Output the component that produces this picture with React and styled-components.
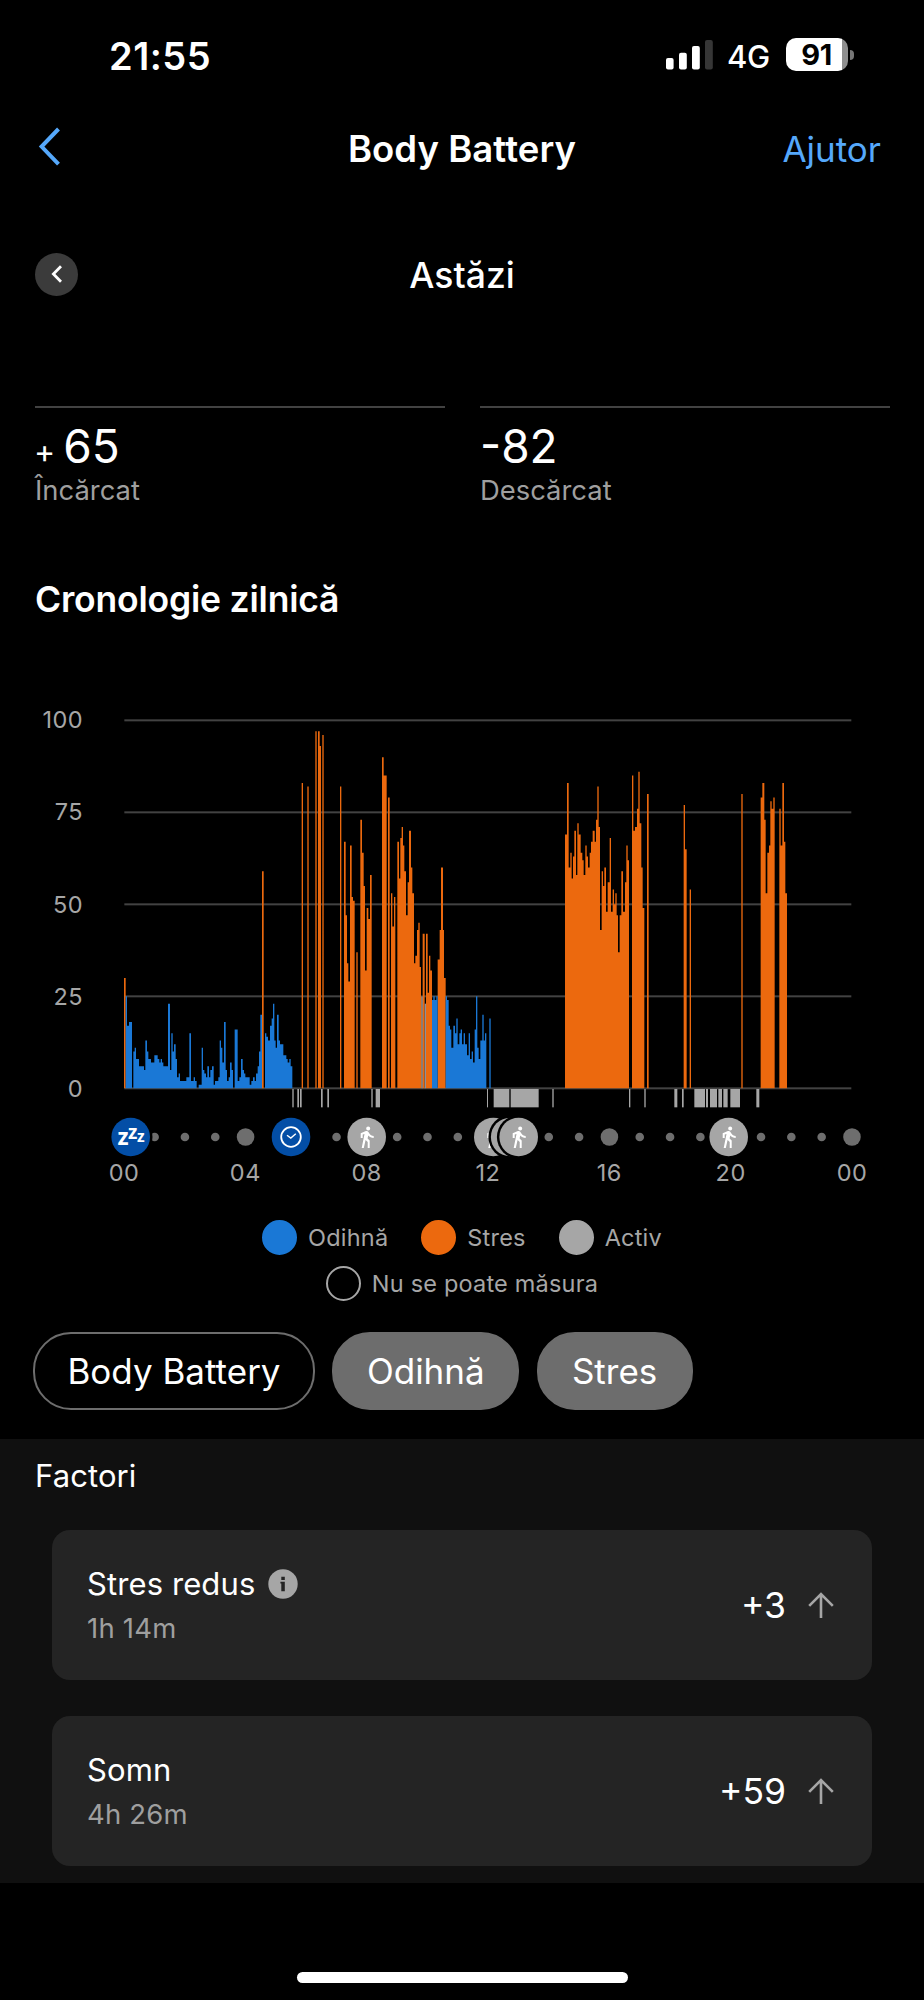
import React from "react";
import styled, { createGlobalStyle } from "styled-components";
import { MdDirectionsWalk } from "react-icons/md";

const BLUE = "#1a78d6";
const ORANGE = "#ec690e";
const GRAY = "#a6a6a6";

// the plot is 2184 x 1104 units, 3 units for each pixel
// steps: x, value, x, value ... the last x closes the run
const runs = [
  { color: ORANGE, at: 0, steps: [0, 30, 5] },
  {
    color: BLUE,
    at: -42,
    steps: [
      47, 25, 51, 17, 57, 18, 66, 0, 70, 10, 74, 11, 78, 8, 87, 6, 102, 5, 106,
      13, 111, 10, 115, 8, 123, 7, 133, 9, 143, 8, 148, 7, 152, 8, 156, 7, 160,
      6, 174, 23, 180, 5, 184, 15, 188, 10, 192, 12, 197, 8, 201, 3, 206, 4,
      210, 2, 229, 3, 238, 15, 243, 2, 251, 3, 255, 2, 260, 0, 266, 1, 275, 11,
      279, 5, 283, 4, 288, 3, 292, 6, 297, 3, 301, 5, 306, 6, 311, 1, 315, 2,
      325, 3, 329, 13, 333, 11, 337, 7, 342, 18, 347, 5, 351, 2, 356, 3, 360, 7,
      365, 5, 369, 0, 374, 16, 383, 2, 388, 3, 393, 8, 398, 5, 402, 4, 406, 3,
      419, 1, 424, 2, 429, 3, 434, 2, 438, 4, 443, 6, 447, 10, 451, 20, 456, 0,
      465, 15, 469, 14, 474, 13, 480, 17, 485, 19, 489, 23, 493, 13, 497, 11,
      501, 20, 506, 13, 510, 12, 520, 9, 529, 8, 533, 7, 538, 8, 542, 6, 547,
    ],
  },
  { color: ORANGE, at: -42, steps: [456, 59, 461] },
  {
    color: ORANGE,
    at: 498,
    steps: [
      35, 83, 39, 0, 52, 82, 56, 0, 76, 97, 80, 0, 84, 97, 89, 93, 93, 0, 97,
      96, 101, 0, 150, 82, 154, 0, 162, 67, 167, 47, 171, 34, 175, 29, 180, 66,
      185, 52, 189, 51, 194, 0, 199, 37, 203, 0, 211, 73, 216, 64, 221, 55, 225,
      32, 230, 49, 235, 46, 240, 58, 245, 0, 276, 90, 281, 85, 290, 0, 294, 79,
      299, 0, 303, 53, 307, 44, 312, 52, 316, 0, 322, 67, 327, 57, 331, 68, 335,
      71, 339, 66, 343, 59, 348, 47, 353, 56, 357, 70, 363, 60, 367, 53, 372,
      34, 376, 36, 381, 43, 385, 45, 389, 33, 393, 0, 398, 42, 404, 0, 408, 42,
      413, 26, 417, 36, 421, 32, 426, 0, 443, 35, 449, 43, 453, 60, 459, 43,
      462, 30, 467,
    ],
  },
  { color: "#8f7c71", at: 498, steps: [393, 25, 399] },
  { color: "#8f9099", at: 498, steps: [404, 23, 408] },
  {
    color: BLUE,
    at: 498,
    steps: [
      426, 24, 430, 25, 434, 24, 439, 25, 443, 0, 467, 25, 471, 24, 476, 17,
      480, 16, 484, 11, 490, 17, 495, 15, 499, 19, 503, 12, 508, 15, 512, 16,
      516, 12, 521, 15, 525, 12, 531, 9, 536, 15, 540, 8, 545, 10, 549, 7, 554,
      16, 558, 25, 562, 11, 566, 8, 571, 13, 577, 20, 581, 13, 585, 15, 589, 0,
      598, 19, 602,
    ],
  },
  {
    color: ORANGE,
    at: 1038,
    steps: [
      285, 69, 291, 83, 296, 60, 301, 64, 305, 57, 309, 63, 313, 70, 318, 58,
      322, 72, 326, 69, 332, 64, 337, 62, 341, 58, 346, 66, 350, 63, 354, 60,
      359, 64, 363, 67, 368, 70, 374, 67, 378, 73, 382, 82, 386, 71, 390, 43,
      395, 59, 399, 55, 403, 60, 408, 48, 413, 56, 419, 68, 423, 48, 428, 54,
      432, 50, 436, 53, 440, 47, 444, 37, 449, 47, 454, 59, 459, 48, 465, 56,
      469, 66, 473, 62, 477, 0, 486, 85, 490, 70, 495, 71, 501, 76, 505, 86,
      509, 72, 514, 60, 518, 49, 523, 0, 531, 80, 536,
    ],
  },
  {
    color: ORANGE,
    at: 1578,
    steps: [
      101, 77, 105, 65, 110, 0, 119, 54, 123, 0, 274, 80, 278, 0, 332, 79, 337,
      83, 343, 73, 347, 53, 352, 64, 357, 66, 361, 78, 365, 76, 370, 79, 374, 0,
      388, 76, 392, 66, 397, 83, 402, 67, 406, 53, 411,
    ],
  },
];

// [x, width] of each active period under the zero line
const activity = [
  [505, 4], [520, 5], [528, 5], [591, 5], [610, 5], [742, 4], [755, 13],
  [1089, 3], [1109, 47], [1160, 84], [1285, 4], [1515, 4], [1561, 4],
  [1651, 9], [1674, 5], [1711, 32], [1746, 6], [1758, 21], [1783, 11],
  [1798, 13], [1819, 29], [1897, 9],
];

const scale = [100, 75, 50, 25, 0];
const hours = ["00", "04", "08", "12", "16", "20", "00"];

const events = [
  { x: 130.7, type: "sleep" },
  { x: 291, type: "wake" },
  { x: 366.7, type: "walk" },
  { x: 493.3, type: "walk" },
  { x: 510.2, type: "walk" },
  { x: 518.7, type: "walk" },
  { x: 728.7, type: "walk" },
];

const factors = [
  { name: "Stres redus", time: "1h 14m", value: "+3", info: true },
  { name: "Somn", time: "4h 26m", value: "+59", info: false },
];

const toPath = ({ at, steps }) => {
  let d = `M${at + steps[0]} 1104`;
  for (let i = 0; i < steps.length - 1; i += 2) {
    d += `V${1104 - steps[i + 1] * 11.04}H${at + steps[i + 2]}`;
  }
  return d + "V1104Z";
};

function Plot() {
  return (
    <PlotSvg viewBox="0 -1 2184 1168">
      {scale.map((value) => (
        <rect
          key={value}
          x="1"
          y={1101 - value * 11.04}
          width="2181"
          height="6"
          fill="#424242"
        />
      ))}
      {runs.map((run, idx) => (
        <path key={idx} d={toPath(run)} fill={run.color} />
      ))}
      {activity.map(([x, width]) => (
        <rect key={x} x={x} y="1106" width={width} height="55" fill={GRAY} />
      ))}
    </PlotSvg>
  );
}

function EventIcon({ x, type }) {
  return (
    <g transform={`translate(${x} 22)`}>
      <circle r="21.8" fill="#000" />
      <circle r="19.3" fill={type === "walk" ? GRAY : "#034ea6"} />
      {type === "walk" && (
        <MdDirectionsWalk x="-12" y="-12" size={24} color="#fff" />
      )}
      {type === "wake" && (
        <g fill="none" stroke="#fff" strokeWidth="1.8">
          <circle r="9.8" />
          <path d="M-4 -1.8L-0.2 1L4.8 -3.2" strokeWidth="1.4" />
        </g>
      )}
      {type === "sleep" && (
        <g fill="#fff" fontFamily="Noto Sans" fontWeight="700">
          <text x="-13.3" y="7.6" fontSize="22.5">z</text>
          <text x="-2.7" y="2.4" fontSize="19">z</text>
          <text x="6.2" y="5" fontSize="15.5">z</text>
        </g>
      )}
    </g>
  );
}

function Timeline() {
  return (
    <TimelineSvg viewBox="0 0 924 44">
      {Array.from({ length: 25 }, (_, hour) => (
        <circle
          key={hour}
          cx={124.3 + hour * 30.32}
          cy="22"
          r={hour % 4 === 0 ? 8.8 : 4.3}
          fill="#6e6e6e"
        />
      ))}
      {events.map((event) => (
        <EventIcon key={event.x} {...event} />
      ))}
    </TimelineSvg>
  );
}

function FactorCard({ name, time, value, info }) {
  return (
    <Card>
      <div>
        <FactorName>
          {name}
          {info && (
            <svg width="30" height="30" viewBox="0 0 30 30">
              <circle cx="15" cy="15" r="14.7" fill={GRAY} />
              <path
                d="M13.3 7.8h3.5v3.3h-3.5zM12.4 12.8h4.4v9.4h-3.5v-7.8h-0.9z"
                fill="#242424"
              />
            </svg>
          )}
        </FactorName>
        <FactorTime>{time}</FactorTime>
      </div>
      <FactorValue>
        {value}
        <svg width="26" height="27" viewBox="0 0 26 27">
          <path
            d="M13 26V1.8M1.2 13.8L13 2L24.8 13.8"
            fill="none"
            stroke={GRAY}
            strokeWidth="2.6"
          />
        </svg>
      </FactorValue>
    </Card>
  );
}

function App() {
  return (
    <Screen>
      <GlobalStyle />
      <StatusBar>
        <Time>21:55</Time>
        <StatusIcons>
          <svg width="47" height="30" viewBox="0 0 47 30">
            <rect x="0" y="18" width="7.6" height="11.4" rx="2" fill="#fff" />
            <rect x="13" y="12.8" width="7.8" height="16.6" rx="2" fill="#fff" />
            <rect x="26" y="6" width="7.8" height="23.4" rx="2" fill="#fff" />
            <rect x="39" y="0" width="7.8" height="29.4" rx="2" fill="#363636" />
          </svg>
          <Network>4G</Network>
          <Battery>
            <Level>91</Level>
          </Battery>
          <BatteryTip />
        </StatusIcons>
      </StatusBar>

      <NavBar>
        <svg width="24" height="40" viewBox="0 0 24 40">
          <path
            d="M20.5 2L3.6 19.6L20.5 37.2"
            fill="none"
            stroke="#55a8fb"
            strokeWidth="4"
          />
        </svg>
        <Title>Body Battery</Title>
        <Help>Ajutor</Help>
      </NavBar>

      <DateNav>
        <RoundButton>
          <svg width="12" height="18" viewBox="0 0 12 18">
            <path
              d="M10 1.3L2.4 9L10 16.7"
              fill="none"
              stroke="#fff"
              strokeWidth="2.8"
            />
          </svg>
        </RoundButton>
        <Day>Astăzi</Day>
      </DateNav>

      <Stats>
        <Stat>
          <StatValue>
            <Plus>+</Plus>65
          </StatValue>
          <StatLabel>Încărcat</StatLabel>
        </Stat>
        <Stat>
          <StatValue>-82</StatValue>
          <StatLabel>Descărcat</StatLabel>
        </Stat>
      </Stats>

      <Heading>Cronologie zilnică</Heading>

      <Chart>
        <Scale>
          {scale.map((value) => (
            <span key={value}>{value}</span>
          ))}
        </Scale>
        <Plot />
      </Chart>
      <Timeline />
      <Hours>
        {hours.map((hour, idx) => (
          <span key={idx}>{hour}</span>
        ))}
      </Hours>

      <Legend>
        <LegendRow>
          <LegendItem>
            <Swatch color={BLUE} />
            Odihnă
          </LegendItem>
          <LegendItem>
            <Swatch color={ORANGE} />
            Stres
          </LegendItem>
          <LegendItem>
            <Swatch color={GRAY} />
            Activ
          </LegendItem>
        </LegendRow>
        <LegendRow>
          <LegendItem>
            <Swatch />
            Nu se poate măsura
          </LegendItem>
        </LegendRow>
      </Legend>

      <Filters>
        <Pill $width={282}>Body Battery</Pill>
        <Pill $width={187} $filled>
          Odihnă
        </Pill>
        <Pill $width={156} $filled>
          Stres
        </Pill>
      </Filters>

      <Factors>
        <FactorsTitle>Factori</FactorsTitle>
        {factors.map((factor) => (
          <FactorCard key={factor.name} {...factor} />
        ))}
      </Factors>

      <HomeIndicator />
    </Screen>
  );
}

export default App;

const GlobalStyle = createGlobalStyle`
  * {
    box-sizing: border-box;
  }
  body {
    margin: 0;
    background: #000;
  }
`;

const Screen = styled.div`
  display: flex;
  flex-direction: column;
  width: 924px;
  height: 2000px;
  overflow: hidden;
  background: #000;
  color: #fff;
  font-family: Inter, "Liberation Sans", sans-serif;
  svg {
    flex-shrink: 0;
  }
`;

const StatusBar = styled.header`
  display: flex;
  justify-content: space-between;
  align-items: center;
  height: 112px;
  padding: 0 70px 0 109px;
`;

const Time = styled.span`
  margin-top: -1px;
  font-size: 38px;
  font-weight: 600;
  letter-spacing: 0.5px;
`;

const StatusIcons = styled.div`
  display: flex;
  align-items: center;
  margin-top: -2px;
`;

const Network = styled.span`
  width: 73px;
  padding: 3px 0 0 14px;
  font-size: 31px;
  font-weight: 500;
  letter-spacing: -0.3px;
`;

const Battery = styled.div`
  width: 62px;
  height: 33px;
  margin-top: -1px;
  border-radius: 10px;
  background: linear-gradient(to right, #fff 91%, #8e8e8e 91%);
`;

const Level = styled.div`
  width: 61px;
  line-height: 34px;
  text-align: center;
  color: #000;
  font-size: 29px;
  font-weight: 700;
  letter-spacing: -0.5px;
`;

const BatteryTip = styled.div`
  width: 4px;
  height: 10px;
  margin: -1px 0 0 2px;
  border-radius: 0 5px 5px 0;
  background: #777;
`;

const NavBar = styled.nav`
  display: grid;
  grid-template-columns: 120px 1fr 120px;
  align-items: center;
  height: 75px;
  padding: 0 43px 0 38px;
  svg {
    margin-top: -6px;
  }
`;

const Title = styled.h1`
  margin: -2px 0 0;
  padding-left: 5px;
  text-align: center;
  font-size: 36.5px;
  font-weight: 600;
  letter-spacing: 0.05px;
`;

const Help = styled.span`
  margin-top: -1px;
  text-align: right;
  color: #55a8fb;
  font-size: 35px;
`;

const DateNav = styled.div`
  display: grid;
  grid-template-columns: 43px 1fr 43px;
  align-items: center;
  height: 176px;
  padding: 0 35px;
`;

const RoundButton = styled.div`
  display: flex;
  justify-content: center;
  align-items: center;
  width: 43px;
  height: 43px;
  margin-top: -2px;
  border-radius: 50%;
  background: #3b3b3b;
`;

const Day = styled.span`
  text-align: center;
  font-size: 35.5px;
  font-weight: 500;
`;

const Stats = styled.div`
  display: grid;
  grid-template-columns: 410px 410px;
  gap: 35px;
  height: 149px;
  padding: 43px 0 0 35px;
`;

const Stat = styled.div`
  height: 106px;
  padding-top: 14px;
  border-top: 2px solid #424242;
`;

const StatValue = styled.div`
  height: 47px;
  line-height: 48px;
  font-size: 46px;
`;

const Plus = styled.span`
  margin: 0 8px 0 -1px;
  line-height: 1;
  font-size: 32px;
`;

const StatLabel = styled.div`
  line-height: 43px;
  color: #9f9f9f;
  font-size: 27.4px;
`;

const Heading = styled.h2`
  height: 60px;
  margin: 57px 0 0 35px;
  line-height: 61px;
  font-size: 35.5px;
  font-weight: 600;
  letter-spacing: -0.2px;
`;

const Chart = styled.div`
  display: flex;
  height: 393px;
  margin-top: 79px;
`;

const Scale = styled.div`
  display: flex;
  flex-direction: column;
  justify-content: space-between;
  width: 83px;
  height: 393px;
  text-align: right;
  line-height: 24px;
  color: ${GRAY};
  font-size: 23.5px;
  letter-spacing: 0.4px;
`;

const PlotSvg = styled.svg`
  width: 728px;
  height: 389.33px;
  margin: 12px 0 0 41px;
  overflow: visible;
`;

const TimelineSvg = styled.svg`
  width: 924px;
  height: 44px;
  margin-top: 13.7px;
`;

const Hours = styled.div`
  display: flex;
  justify-content: space-between;
  width: 788px;
  height: 24px;
  margin: 1px 0 0 94px;
  color: ${GRAY};
  line-height: 26px;
  font-size: 23.5px;
  letter-spacing: 0.5px;
  span {
    width: 60px;
    text-align: center;
  }
`;

const Legend = styled.div`
  margin-top: 30.6px;
`;

const LegendRow = styled.div`
  display: flex;
  justify-content: center;
  gap: 33px;
  height: 46.2px;
`;

const LegendItem = styled.div`
  display: flex;
  align-items: center;
  gap: 11px;
  color: ${GRAY};
  font-size: 23.5px;
  letter-spacing: 0.2px;
`;

const Swatch = styled.span`
  width: 35px;
  height: 35px;
  border: 2px solid ${(props) => props.color || GRAY};
  border-radius: 50%;
  background: ${(props) => props.color || "transparent"};
`;

const Filters = styled.div`
  display: flex;
  gap: 17.3px;
  margin: 25.5px 0 0 33px;
`;

const Pill = styled.div`
  width: ${(props) => props.$width}px;
  height: 78px;
  border: 2px solid #6d6d6d;
  border-radius: 38px;
  background: ${(props) => (props.$filled ? "#6d6d6d" : "transparent")};
  text-align: center;
  line-height: 75px;
  font-size: 35px;
`;

const Factors = styled.section`
  height: 444.3px;
  margin-top: 28.4px;
  padding: 0 52px;
  background: #101010;
`;

const FactorsTitle = styled.h3`
  height: 91px;
  margin: 0 0 0 -17px;
  line-height: 74px;
  font-size: 31px;
  font-weight: 400;
  letter-spacing: 0.1px;
`;

const Card = styled.div`
  display: flex;
  justify-content: space-between;
  height: 150.5px;
  margin-bottom: 35.6px;
  padding: 34px 38px 0 35px;
  border-radius: 18px;
  background: #242424;
`;

const FactorName = styled.div`
  display: flex;
  align-items: center;
  gap: 12.5px;
  height: 40px;
  font-size: 31px;
  letter-spacing: 0.1px;
`;

const FactorTime = styled.div`
  line-height: 49px;
  color: #9f9f9f;
  font-size: 27.5px;
  letter-spacing: 0.2px;
`;

const FactorValue = styled.div`
  display: flex;
  align-items: center;
  gap: 22px;
  height: 84px;
  font-size: 35.5px;
`;

const HomeIndicator = styled.div`
  width: 331px;
  height: 11px;
  margin: 89px 0 0 297px;
  border-radius: 6px;
  background: #fff;
`;
